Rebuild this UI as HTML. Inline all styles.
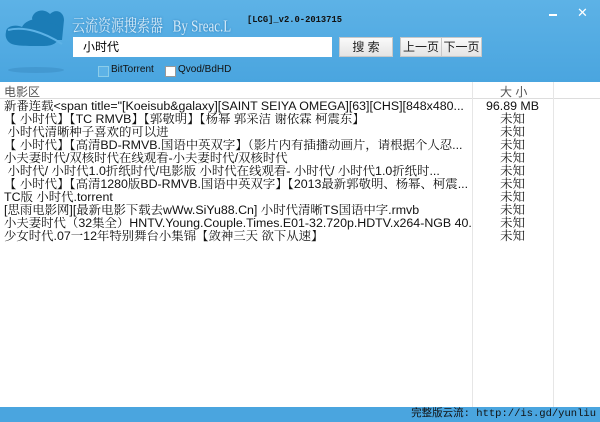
<!DOCTYPE html>
<html><head><meta charset="utf-8"><style>
body{margin:0;width:600px;height:422px;overflow:hidden;font-family:"Liberation Sans","Noto Serif CJK SC",sans-serif;background:#fff;position:relative}
.top{position:absolute;left:0;top:0;width:600px;height:82px;background:linear-gradient(#5db2e6,#4aa5df)}
.title{position:absolute;left:72px;top:12px;color:#d6ebf9;font-family:"Liberation Serif","Noto Serif CJK SC",serif;font-size:13px;transform:scaleY(1.3);transform-origin:left top;text-shadow:0 0 2px #2a77b0;white-space:nowrap}
.ver{position:absolute;left:247px;top:15px;font-family:"Liberation Mono",monospace;font-size:8.8px;font-weight:bold;color:#111}
.inp{position:absolute;left:73px;top:37px;width:259px;height:20px;background:#fff;font-size:12px;line-height:20px;padding-left:10px;box-sizing:border-box;font-family:"Liberation Sans","Noto Sans CJK SC",sans-serif}
.btn{position:absolute;top:37px;height:20px;background:linear-gradient(#fafafa,#e4e4e4);border:1px solid #c8c8c8;box-sizing:border-box;font-size:12px;line-height:18px;text-align:center;font-family:"Liberation Sans","Noto Sans CJK SC",sans-serif;color:#222}
.cb{position:absolute;top:66px;width:9px;height:9px;border:1px solid #999;background:#fff}
.cbl{position:absolute;top:64px;font-family:"Liberation Sans",sans-serif;font-size:10px;color:#111}
.hdr{position:absolute;left:0;top:82px;width:600px;height:16px;border-bottom:1px solid #ddd;font-size:12px;color:#555;font-family:"Liberation Sans","Noto Sans CJK SC",sans-serif}
.rows{position:absolute;left:0;top:100px;width:600px}
.r{height:13px;line-height:13px;font-size:12.4px;white-space:nowrap;position:relative;color:#111}
.r .n{position:absolute;left:4px;width:468px;overflow:hidden}
.r .s{position:absolute;left:472px;width:81px;text-align:center}
.vl{position:absolute;top:82px;width:1px;height:325px;background:#e6e6e6}
.foot{position:absolute;left:0;top:407px;width:600px;height:15px;background:#4aa5df}
.ft{position:absolute;right:4px;top:407px;font-size:10.5px;line-height:15px;color:#111;font-family:"Liberation Mono","Noto Sans CJK SC",monospace}
</style></head><body>
<div class="top"></div>
<svg style="position:absolute;left:0;top:0" width="72" height="82" viewBox="0 0 72 82">
<path d="M32 18 C34 10 44 8 50 14 C56 8 64 12 64 20 L62 40 L36 40 Z" fill="#1b7cb6"/>
<path d="M6 32 C6 26 16 24 22 27 C26 18 44 16 50 24 C58 22 64 30 58 40 C54 46 48 46 40 46 C26 46 14 46 10 43 C6 40 5 36 6 32 Z" fill="#1b7cb6"/>
<path d="M8 30 C24 26 44 32 62 44" stroke="#5db2e6" stroke-width="2" fill="none"/>
<ellipse cx="36" cy="70" rx="28" ry="3" fill="#3d8fc7" opacity="0.6"/>
</svg>
<div class="title">云流资源搜索器 &nbsp;&nbsp;By Sreac.L</div>
<div class="ver">[LCG]_v2.0-2013715</div>
<div style="position:absolute;left:549px;top:14px;width:8px;height:2px;background:#fff"></div>
<div style="position:absolute;left:577px;top:5px;color:#fff;font-size:13px;font-family:'Liberation Sans'">✕</div>
<div class="inp">小时代</div>
<div class="btn" style="left:339px;width:54px">搜 索</div>
<div class="btn" style="left:400px;width:42px">上一页</div>
<div class="btn" style="left:441px;width:41px">下一页</div>
<div class="cb" style="left:98px;background:#5db2e6;border-color:#8ccde9"></div>
<div class="cbl" style="left:111px">BitTorrent</div>
<div class="cb" style="left:165px"></div>
<div class="cbl" style="left:178px">Qvod/BdHD</div>
<div class="hdr"><span style="position:absolute;left:4px;top:1px">电影区</span><span style="position:absolute;left:500px;top:1px">大 小</span></div>
<div class="vl" style="left:472px"></div><div class="vl" style="left:553px"></div>
<div class="rows">
<div class="r"><span class="n">新番连载&lt;span title="[Koeisub&amp;galaxy][SAINT SEIYA OMEGA][63][CHS][848x480...</span><span class="s">96.89 MB</span></div>
<div class="r"><span class="n">【 小时代】【TC RMVB】【郭敬明】【杨幂 郭采洁 谢依霖 柯震东】</span><span class="s">未知</span></div>
<div class="r"><span class="n">&nbsp;小时代清晰种子喜欢的可以进</span><span class="s">未知</span></div>
<div class="r"><span class="n">【 小时代】【高清BD-RMVB.国语中英双字】（影片内有插播动画片，请根据个人忍...</span><span class="s">未知</span></div>
<div class="r"><span class="n">小夫妻时代/双核时代在线观看-小夫妻时代/双核时代</span><span class="s">未知</span></div>
<div class="r"><span class="n">&nbsp;小时代/ 小时代1.0折纸时代/电影版 小时代在线观看- 小时代/ 小时代1.0折纸时...</span><span class="s">未知</span></div>
<div class="r"><span class="n">【 小时代】【高清1280版BD-RMVB.国语中英双字】【2013最新郭敬明、杨幂、柯震...</span><span class="s">未知</span></div>
<div class="r"><span class="n">TC版 小时代.torrent</span><span class="s">未知</span></div>
<div class="r"><span class="n">[思雨电影网][最新电影下载去wWw.SiYu88.Cn] 小时代清晰TS国语中字.rmvb</span><span class="s">未知</span></div>
<div class="r"><span class="n">小夫妻时代（32集全）HNTV.Young.Couple.Times.E01-32.720p.HDTV.x264-NGB 40.90G</span><span class="s">未知</span></div>
<div class="r"><span class="n">少女时代.07一12年特别舞台小集锦【敛神三天 欲下从速】</span><span class="s">未知</span></div>
</div>
<div class="foot"></div>
<div class="ft">完整版云流: http://is.gd/yunliu</div>
</body></html>
